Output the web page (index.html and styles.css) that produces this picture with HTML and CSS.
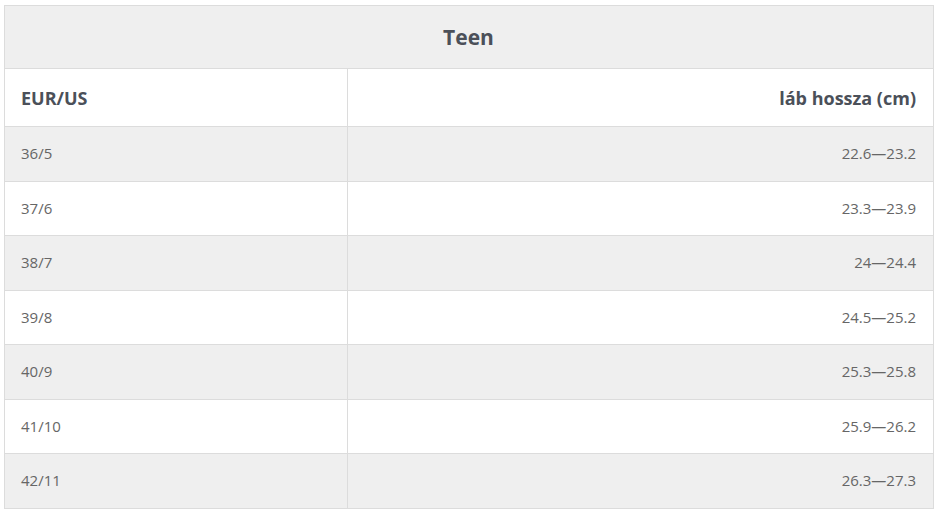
FILE: index.html
```html
<!DOCTYPE html>
<html lang="hu">
<head>
<meta charset="utf-8">
<title>Teen</title>
<link rel="stylesheet" href="styles.css">
</head>
<body>
<table class="size-table">
  <thead>
    <tr class="title-row"><th colspan="2">Teen</th></tr>
  </thead>
  <tbody>
    <tr class="head-row"><th class="c1">EUR/US</th><th class="c2">láb hossza (cm)</th></tr>
    <tr class="odd"><td class="c1">36/5</td><td class="c2">22.6—23.2</td></tr>
    <tr><td class="c1">37/6</td><td class="c2">23.3—23.9</td></tr>
    <tr class="odd"><td class="c1">38/7</td><td class="c2">24—24.4</td></tr>
    <tr><td class="c1">39/8</td><td class="c2">24.5—25.2</td></tr>
    <tr class="odd"><td class="c1">40/9</td><td class="c2">25.3—25.8</td></tr>
    <tr><td class="c1">41/10</td><td class="c2">25.9—26.2</td></tr>
    <tr class="odd"><td class="c1">42/11</td><td class="c2">26.3—27.3</td></tr>
  </tbody>
</table>
</body>
</html>
```
FILE: styles.css
```css
html, body {
  margin: 0;
  padding: 0;
  background: #fff;
}
body {
  padding: 5px 6px 0 4px;
  font-family: "Open Sans", "Noto Sans", sans-serif;
}
.size-table {
  width: 930px;
  border-collapse: collapse;
  border: 1px solid #dcdcdc;
  color: #666;
  font-size: 15px;
}
.size-table th,
.size-table td {
  border: 1px solid #dcdcdc;
  padding: 0 17px 0 16px;
}
.title-row th {
  height: 62px;
  background: #efefef;
  color: #4b5059;
  font-size: 21px;
  font-weight: 700;
  text-align: center;
}
.head-row th {
  height: 57px;
  background: #fff;
  color: #4b5059;
  font-size: 18px;
  font-weight: 700;
}
.c1 {
  width: 309px;
  text-align: left;
}
.c2 {
  text-align: right;
}
.size-table td {
  height: 52.5px;
  padding-bottom: 1px;
}
.odd td {
  background: #efefef;
}
```
